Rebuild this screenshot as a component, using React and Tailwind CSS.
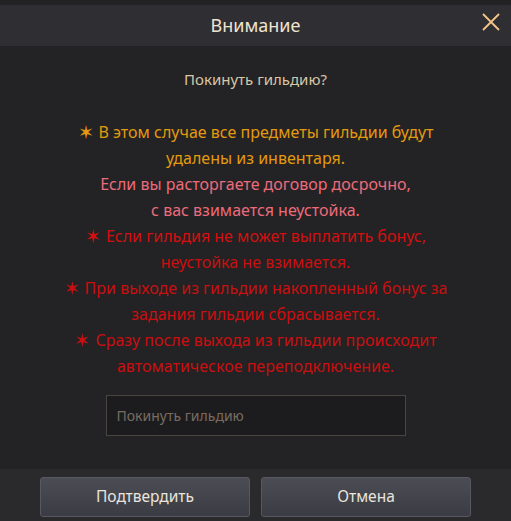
import React from "react";

const lines = [
  { star: true, text: "В этом случае все предметы гильдии будут", color: "text-[#e39a0e]" },
  { text: "удалены из инвентаря.", color: "text-[#e39a0e]" },
  { text: "Если вы расторгаете договор досрочно,", color: "text-[#ec6b7b]" },
  { text: "с вас взимается неустойка.", color: "text-[#ec6b7b]" },
  { star: true, text: "Если гильдия не может выплатить бонус,", color: "text-[#d40f0f]" },
  { text: "неустойка не взимается.", color: "text-[#c90f0f]" },
  { star: true, text: "При выходе из гильдии накопленный бонус за", color: "text-[#c90f0f]" },
  { text: "задания гильдии сбрасывается.", color: "text-[#c90f0f]" },
  { star: true, text: "Сразу после выхода из гильдии происходит", color: "text-[#c90f0f]" },
  { text: "автоматическое переподключение.", color: "text-[#c90f0f]" },
];

const App = () => {
  return (
    <div className="w-[511px] h-[521px] overflow-hidden bg-[#232325] flex flex-col font-['Noto_Sans',sans-serif]">
      <div className="h-[5px] bg-[#222224]" />
      <div className="relative h-[41px] bg-[#2f2f33] flex items-center justify-center">
        <span className="text-[18px] text-[#efe4d0]">Внимание</span>
        <button className="absolute right-[11px] top-[8px] w-[18px] h-[18px]">
          <svg viewBox="0 0 18 18" width="18" height="18">
            <path d="M1 1 L17 17 M17 1 L1 17" stroke="#f4c587" strokeWidth="1.8" />
          </svg>
        </button>
      </div>

      <div className="flex-1 flex flex-col items-center">
        <div className="mt-[21px] text-[15px] text-[#d8c6a6] leading-[24px]">Покинуть гильдию?</div>
        <div className="mt-[28px] flex flex-col items-center text-[16px] leading-[26px]">
          {lines.map((l, i) => (
            <div key={i} className={`${l.color} flex items-center`}>
              {l.star && <span className="text-[19px] leading-none mr-[5px]">✶</span>}
              <span>{l.text}</span>
            </div>
          ))}
        </div>
        <div className="mt-[16px] w-[300px] h-[41px] border border-[#4b4540] bg-[#1c1c1e] flex items-center px-[10px]">
          <span className="text-[14px] text-[#786c62]">Покинуть гильдию</span>
        </div>
      </div>

      <div className="h-[52px] bg-[#2a2a2d] flex justify-center gap-[11px] pt-[8px]">
        <button className="w-[210px] h-[40px] rounded-[3px] border border-[#575861] bg-gradient-to-b from-[#4b4c54] to-[#3b3c43] text-[15.5px] text-[#e9e5dd]">
          Подтвердить
        </button>
        <button className="w-[210px] h-[40px] rounded-[3px] border border-[#575861] bg-gradient-to-b from-[#4b4c54] to-[#3b3c43] text-[15.5px] text-[#e9e5dd]">
          Отмена
        </button>
      </div>
    </div>
  );
};

export default App;
